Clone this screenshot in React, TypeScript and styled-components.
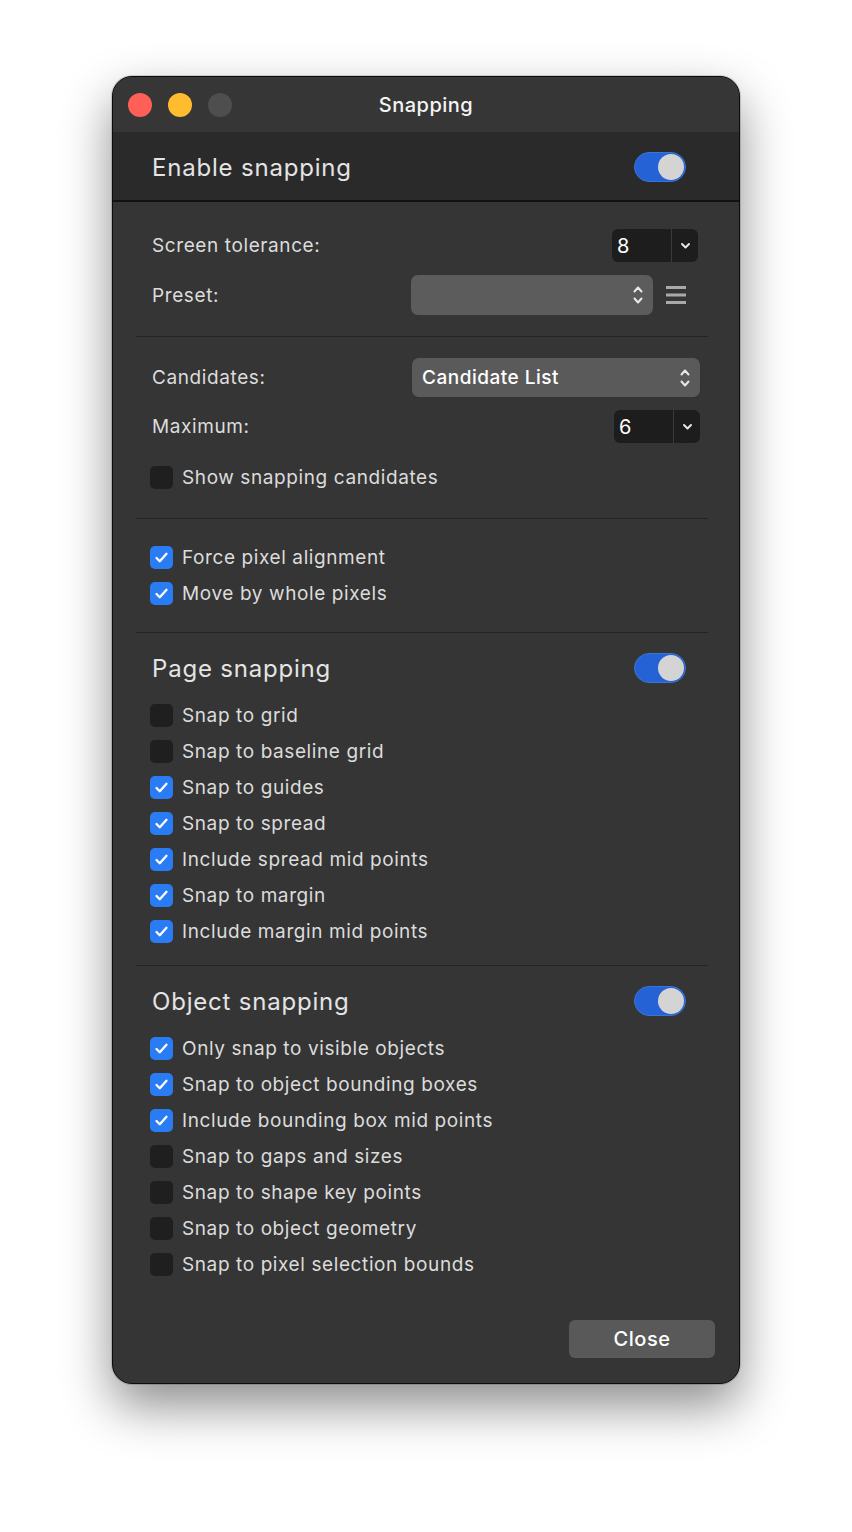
import React, { FC, useState } from "react";
import styled, { createGlobalStyle } from "styled-components";

const GlobalStyle = createGlobalStyle`
  html, body {
    margin: 0;
    padding: 0;
    background: #ffffff;
  }
  body {
    font-family: "Inter", "Noto Sans", sans-serif;
    -webkit-font-smoothing: antialiased;
  }
`;

const StyledPage = styled.div`
  width: 852px;
  min-height: 1532px;
  padding: 76px 0 0 112px;
  box-sizing: border-box;
`;
const StyledWindow = styled.div`
  width: 628px;
  height: 1308px;
  box-sizing: border-box;
  background: #353535;
  border: 1px solid #0c0c0c;
  border-radius: 20px;
  overflow: hidden;
  box-shadow: 0 22px 50px rgba(0, 0, 0, 0.45), 0 0 0 1px rgba(0, 0, 0, 0.15);
  display: flex;
  flex-direction: column;
  color: #dedede;
`;
const StyledTitleBar = styled.div`
  height: 55px;
  flex-shrink: 0;
  display: grid;
  grid-template-columns: 1fr auto 1fr;
  align-items: center;
  padding: 0 15px;
  background: #363636;
`;
const StyledLights = styled.div`
  display: flex;
  gap: 16px;
`;
const StyledLight = styled.span<{ $color: string }>`
  width: 24px;
  height: 24px;
  border-radius: 50%;
  background: ${(p) => p.$color};
`;
const StyledTitle = styled.div`
  font-size: 20px;
  font-weight: 500;
  letter-spacing: 0.5px;
  color: #f4f4f4;
`;
const StyledHeaderBand = styled.div`
  height: 70px;
  flex-shrink: 0;
  background: #2a2a2a;
  border-bottom: 2px solid #121212;
  display: flex;
  align-items: center;
  justify-content: space-between;
  padding: 2px 53px 0 39px;
  box-sizing: border-box;
`;
const StyledHeading = styled.div`
  font-size: 24px;
  letter-spacing: 0.8px;
  color: #e4e4e4;
`;
const StyledBody = styled.div`
  display: flex;
  flex-direction: column;
  padding: 0 31px 0 23px;
`;
const StyledSection = styled.div<{ $pad: string; $last?: boolean }>`
  display: flex;
  flex-direction: column;
  padding: ${(p) => p.$pad};
  border-bottom: ${(p) => (p.$last ? "none" : "1px solid #242424")};
`;
const StyledFieldRow = styled.div<{ $h: number; $mb: number }>`
  height: ${(p) => p.$h}px;
  margin-bottom: ${(p) => p.$mb}px;
  display: flex;
  align-items: center;
  justify-content: space-between;
  padding-left: 16px;
`;
const StyledLabel = styled.span`
  font-size: 19px;
  letter-spacing: 0.6px;
  color: #dcdcdc;
`;
const StyledCombo = styled.div<{ $mr: number }>`
  width: 86px;
  height: 33px;
  margin-right: ${(p) => p.$mr}px;
  border-radius: 6px;
  background: #1d1d1d;
  display: flex;
  align-items: stretch;
`;
const StyledComboValue = styled.div`
  flex: 1;
  display: flex;
  align-items: center;
  padding-left: 5px;
  font-size: 20px;
  color: #ffffff;
  border-right: 1px solid #3a3a3a;
`;
const StyledComboArrow = styled.div`
  width: 26px;
  display: flex;
  align-items: center;
  justify-content: center;
`;
const StyledPopup = styled.div<{ $w: number; $h: number; $bg: string; $mr: number }>`
  width: ${(p) => p.$w}px;
  height: ${(p) => p.$h}px;
  margin-right: ${(p) => p.$mr}px;
  border-radius: 7px;
  background: ${(p) => p.$bg};
  display: flex;
  align-items: center;
  justify-content: space-between;
  padding: 0 9px 0 10px;
  box-sizing: border-box;
  font-size: 19px;
  font-weight: 500;
  letter-spacing: 0.5px;
  color: #ffffff;
`;
const StyledPresetGroup = styled.div`
  display: flex;
  align-items: center;
  gap: 13px;
  margin-right: 22px;
`;
const StyledCheckRow = styled.label`
  height: 36px;
  display: flex;
  align-items: center;
  gap: 9px;
  padding-left: 14px;
  cursor: pointer;
`;
const StyledCheckBox = styled.span<{ $on: boolean }>`
  width: 23px;
  height: 23px;
  border-radius: 5px;
  background: ${(p) => (p.$on ? "#2a7cf5" : "#1f1f1f")};
  display: flex;
  align-items: center;
  justify-content: center;
  flex-shrink: 0;
`;
const StyledGroupHead = styled.div`
  height: 38px;
  margin-bottom: 10px;
  display: flex;
  align-items: center;
  justify-content: space-between;
  padding: 0 22px 0 16px;
`;
const StyledToggle = styled.button<{ $on: boolean }>`
  width: 52px;
  height: 30px;
  border-radius: 15px;
  border: 1px solid ${(p) => (p.$on ? "#3b74d4" : "#4a4a4a")};
  background: ${(p) => (p.$on ? "#2462d6" : "#555555")};
  padding: 1px;
  display: flex;
  justify-content: ${(p) => (p.$on ? "flex-end" : "flex-start")};
  cursor: pointer;
  box-sizing: border-box;
`;
const StyledKnob = styled.span`
  width: 26px;
  height: 26px;
  border-radius: 50%;
  background: #d4d4d4;
`;
const StyledFooter = styled.div`
  display: flex;
  justify-content: flex-end;
  padding: 0 24px 25px 0;
  margin-top: auto;
`;
const StyledCloseButton = styled.button`
  width: 146px;
  height: 38px;
  border: none;
  border-radius: 6px;
  background: #595959;
  color: #ffffff;
  font-family: inherit;
  font-size: 20px;
  font-weight: 500;
  letter-spacing: 0.5px;
  cursor: pointer;
`;

const Chevron: FC = () => (
  <svg width="11" height="8" viewBox="0 0 11 8">
    <path d="M2 2l3.5 3.5L9 2" fill="none" stroke="#e6e6e6" strokeWidth="2" strokeLinecap="round" strokeLinejoin="round" />
  </svg>
);

const UpDown: FC = () => (
  <svg width="12" height="24" viewBox="0 0 12 24">
    <path d="M2.5 8.5L6 4.5l3.5 4M2.5 15.5L6 19.5l3.5-4" fill="none" stroke="#e8e8e8" strokeWidth="2" strokeLinecap="round" strokeLinejoin="round" />
  </svg>
);

const MenuIcon: FC = () => (
  <svg width="20" height="20" viewBox="0 0 20 20">
    <rect x="0" y="1" width="20" height="3" fill="#a9a9a9" />
    <rect x="0" y="8.5" width="20" height="3" fill="#a9a9a9" />
    <rect x="0" y="16" width="20" height="3" fill="#a9a9a9" />
  </svg>
);

const CheckMark: FC = () => (
  <svg width="15" height="13" viewBox="0 0 15 13">
    <path d="M2.5 7l3.3 3.3L12.5 2.8" fill="none" stroke="#ffffff" strokeWidth="2.3" strokeLinecap="round" strokeLinejoin="round" />
  </svg>
);

const Toggle: FC<{ on: boolean; onClick: () => void }> = ({ on, onClick }) => (
  <StyledToggle $on={on} onClick={onClick}>
    <StyledKnob />
  </StyledToggle>
);

const CheckItem: FC<{ label: string; on: boolean; onToggle: () => void }> = ({ label, on, onToggle }) => (
  <StyledCheckRow onClick={onToggle}>
    <StyledCheckBox $on={on}>{on && <CheckMark />}</StyledCheckBox>
    <StyledLabel>{label}</StyledLabel>
  </StyledCheckRow>
);

const pageOptions = [
  { label: "Snap to grid", on: false },
  { label: "Snap to baseline grid", on: false },
  { label: "Snap to guides", on: true },
  { label: "Snap to spread", on: true },
  { label: "Include spread mid points", on: true },
  { label: "Snap to margin", on: true },
  { label: "Include margin mid points", on: true },
];

const objectOptions = [
  { label: "Only snap to visible objects", on: true },
  { label: "Snap to object bounding boxes", on: true },
  { label: "Include bounding box mid points", on: true },
  { label: "Snap to gaps and sizes", on: false },
  { label: "Snap to shape key points", on: false },
  { label: "Snap to object geometry", on: false },
  { label: "Snap to pixel selection bounds", on: false },
];

const App: FC = () => {
  const [enabled, setEnabled] = useState<boolean>(true)
  const [pageOn, setPageOn] = useState<boolean>(true)
  const [objectOn, setObjectOn] = useState<boolean>(true)
  const [checks, setChecks] = useState<Record<string, boolean>>(() => {
    const init: Record<string, boolean> = {
      "Show snapping candidates": false,
      "Force pixel alignment": true,
      "Move by whole pixels": true,
    }
    ;[...pageOptions, ...objectOptions].forEach((o) => (init[o.label] = o.on))
    return init
  })

  const flip = (label: string) => {
    setChecks((c) => ({ ...c, [label]: !c[label] }))
  }

  return (
    <StyledPage>
      <GlobalStyle />
      <StyledWindow>
        <StyledTitleBar>
          <StyledLights>
            <StyledLight $color="#fe5f57" />
            <StyledLight $color="#febc2e" />
            <StyledLight $color="#4e4e4e" />
          </StyledLights>
          <StyledTitle>Snapping</StyledTitle>
          <div />
        </StyledTitleBar>

        <StyledHeaderBand>
          <StyledHeading>Enable snapping</StyledHeading>
          <Toggle on={enabled} onClick={() => setEnabled(!enabled)} />
        </StyledHeaderBand>

        <StyledBody>
          <StyledSection $pad="27px 0 21px 0">
            <StyledFieldRow $h={33} $mb={13}>
              <StyledLabel>Screen tolerance:</StyledLabel>
              <StyledCombo $mr={10}>
                <StyledComboValue>8</StyledComboValue>
                <StyledComboArrow><Chevron /></StyledComboArrow>
              </StyledCombo>
            </StyledFieldRow>
            <StyledFieldRow $h={40} $mb={0}>
              <StyledLabel>Preset:</StyledLabel>
              <StyledPresetGroup>
                <StyledPopup $w={242} $h={40} $bg="#5c5c5c" $mr={0}>
                  <span />
                  <UpDown />
                </StyledPopup>
                <MenuIcon />
              </StyledPresetGroup>
            </StyledFieldRow>
          </StyledSection>

          <StyledSection $pad="21px 0 23px 0">
            <StyledFieldRow $h={39} $mb={13}>
              <StyledLabel>Candidates:</StyledLabel>
              <StyledPopup $w={288} $h={39} $bg="#5a5a5a" $mr={8}>
                <span>Candidate List</span>
                <UpDown />
              </StyledPopup>
            </StyledFieldRow>
            <StyledFieldRow $h={33} $mb={16}>
              <StyledLabel>Maximum:</StyledLabel>
              <StyledCombo $mr={8}>
                <StyledComboValue>6</StyledComboValue>
                <StyledComboArrow><Chevron /></StyledComboArrow>
              </StyledCombo>
            </StyledFieldRow>
            <CheckItem
              label="Show snapping candidates"
              on={checks["Show snapping candidates"]}
              onToggle={() => flip("Show snapping candidates")}
            />
          </StyledSection>

          <StyledSection $pad="20px 0 21px 0">
            {["Force pixel alignment", "Move by whole pixels"].map((l) => (
              <CheckItem key={l} label={l} on={checks[l]} onToggle={() => flip(l)} />
            ))}
          </StyledSection>

          <StyledSection $pad="16px 0 16px 0">
            <StyledGroupHead>
              <StyledHeading>Page snapping</StyledHeading>
              <Toggle on={pageOn} onClick={() => setPageOn(!pageOn)} />
            </StyledGroupHead>
            {pageOptions.map((o) => (
              <CheckItem key={o.label} label={o.label} on={checks[o.label]} onToggle={() => flip(o.label)} />
            ))}
          </StyledSection>

          <StyledSection $pad="16px 0 0 0" $last>
            <StyledGroupHead>
              <StyledHeading>Object snapping</StyledHeading>
              <Toggle on={objectOn} onClick={() => setObjectOn(!objectOn)} />
            </StyledGroupHead>
            {objectOptions.map((o) => (
              <CheckItem key={o.label} label={o.label} on={checks[o.label]} onToggle={() => flip(o.label)} />
            ))}
          </StyledSection>
        </StyledBody>

        <StyledFooter>
          <StyledCloseButton>Close</StyledCloseButton>
        </StyledFooter>
      </StyledWindow>
    </StyledPage>
  );
};

export default App;
